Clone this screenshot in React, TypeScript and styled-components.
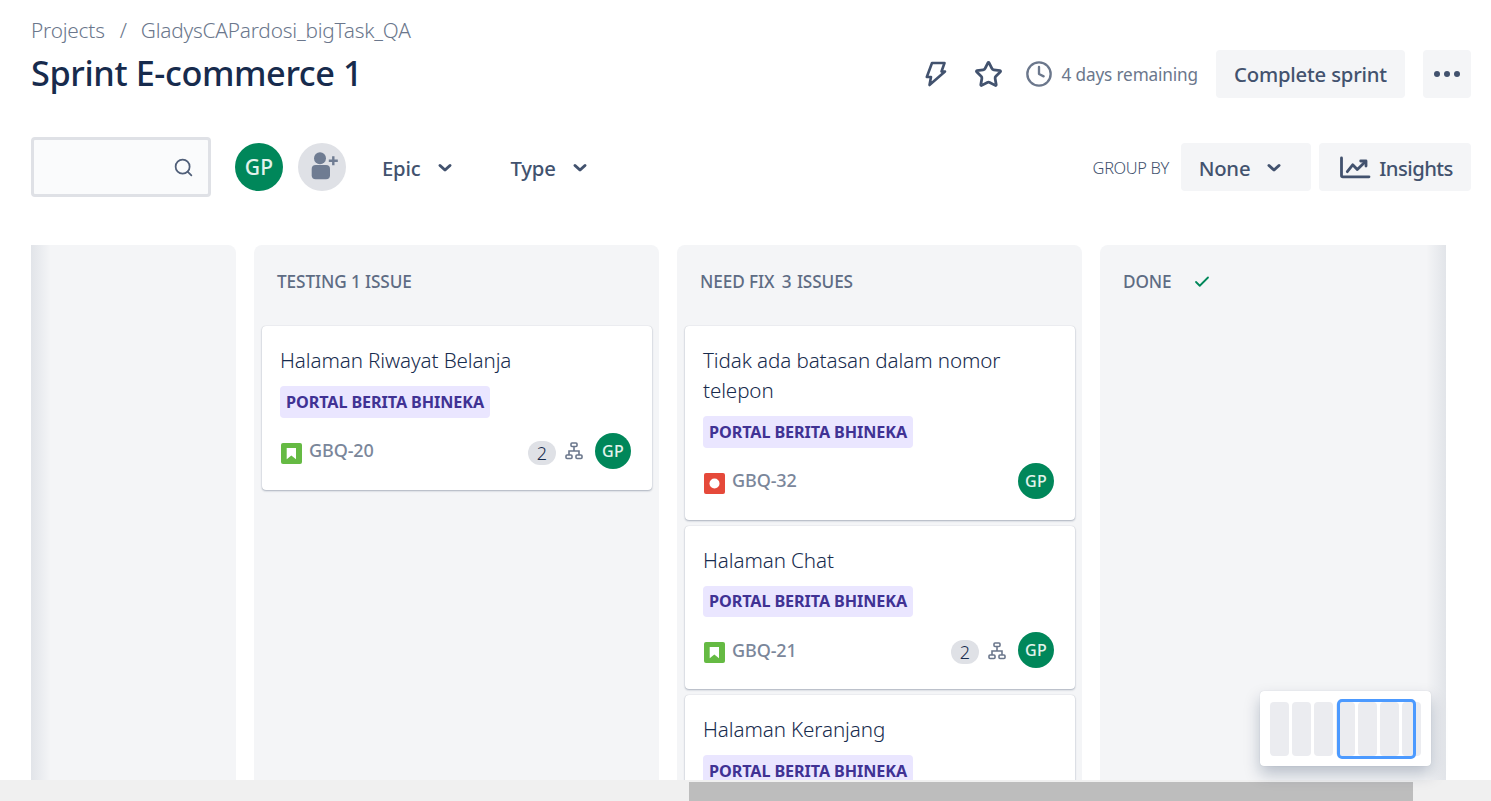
import React from "react";
import styled, { createGlobalStyle } from "styled-components";
import { Star, Clock, Search, Check } from "lucide-react";

const Global = createGlobalStyle`
  html, body { margin: 0; padding: 0; height: 100%; background: #fff; overflow: hidden; }
  body { font-family: "Noto Sans", "Open Sans", "Liberation Sans", sans-serif; color: #172b4d; }
  * { box-sizing: border-box; }
`;

const Page = styled.div`
  display: flex;
  flex-direction: column;
  height: 801px;
  width: 1491px;
  overflow: hidden;
  position: relative;
`;
const Header = styled.header`
  padding: 15px 20px 0 31px;
  flex: none;
`;
const Breadcrumbs = styled.nav`
  display: flex;
  align-items: center;
  height: 30px;
  font-size: 20.8px;
  font-weight: 300;
  color: #6b778c;
  letter-spacing: -0.2px;
`;
const Slash = styled.span`
  margin: 0 14px 0 15px;
`;
const TitleRow = styled.div`
  display: flex;
  align-items: center;
  justify-content: space-between;
  height: 48px;
  margin-top: 5px;
`;
const Title = styled.h1`
  margin: -3px 0 0;
  font-size: 34.3px;
  font-weight: 500;
  color: #172b4d;
  letter-spacing: -0.4px;
  line-height: 48px;
`;
const Actions = styled.div`
  display: flex;
  align-items: center;
`;
const IconSlot = styled.span<{ $mr: number }>`
  display: flex;
  align-items: center;
  justify-content: center;
  color: #42526e;
  margin-right: ${(p) => p.$mr}px;
`;
const Remaining = styled.span`
  font-size: 17.2px;
  color: #6b778c;
  margin-right: 18px;
  letter-spacing: -0.15px;
`;
const GreyButton = styled.button<{ $w: number; $ml?: number }>`
  display: flex;
  align-items: center;
  justify-content: center;
  width: ${(p) => p.$w}px;
  height: 48px;
  margin-left: ${(p) => p.$ml ?? 0}px;
  border: none;
  border-radius: 4px;
  background: #f4f5f7;
  color: #42526e;
  font-family: inherit;
  font-size: 20.3px;
  font-weight: 500;
  letter-spacing: -0.2px;
  padding: 0;
`;
const Dots = styled.span`
  display: flex;
  gap: 4px;
`;
const Dot = styled.i`
  width: 6px;
  height: 6px;
  border-radius: 50%;
  background: #42526e;
`;
const Toolbar = styled.div`
  display: flex;
  align-items: center;
  height: 60px;
  margin-top: 39px;
  justify-content: space-between;
`;
const ToolGroup = styled.div`
  display: flex;
  align-items: center;
`;
const SearchBox = styled.div`
  display: flex;
  align-items: center;
  justify-content: flex-end;
  width: 180px;
  height: 60px;
  border: 3px solid #dfe1e6;
  border-radius: 4px;
  background: #fafbfc;
  padding-right: 14px;
  margin-right: 24px;
  color: #505f79;
`;
const Avatar = styled.span<{ $size: number }>`
  display: flex;
  align-items: center;
  justify-content: center;
  flex: none;
  width: ${(p) => p.$size}px;
  height: ${(p) => p.$size}px;
  border-radius: 50%;
  background: #00875a;
  color: #e3f3ec;
  font-weight: 500;
  font-size: ${(p) => (p.$size > 40 ? 21 : 16)}px;
  letter-spacing: 0.2px;
`;
const AddPeople = styled.span`
  display: flex;
  align-items: center;
  justify-content: center;
  width: 48px;
  height: 48px;
  margin-left: 15px;
  border-radius: 50%;
  background: #dfe1e6;
`;
const Filter = styled.span<{ $ml: number; $gap: number }>`
  display: flex;
  align-items: center;
  gap: ${(p) => p.$gap}px;
  margin-left: ${(p) => p.$ml}px;
  font-size: 20.3px;
  font-weight: 500;
  letter-spacing: -0.2px;
  color: #42526e;
  padding-top: 2px;
`;
const GroupLabel = styled.span`
  font-size: 16.4px;
  font-weight: 300;
  color: #42526e;
  margin-right: 12px;
  letter-spacing: -0.35px;
`;
const ButtonInner = styled.span<{ $gap: number; $shift: number }>`
  display: flex;
  align-items: center;
  gap: ${(p) => p.$gap}px;
  margin-right: ${(p) => p.$shift}px;
  padding-top: 1px;
`;
const InsightsLabel = styled.span`
  letter-spacing: -0.55px;
`;
const BoardWrap = styled.div`
  position: relative;
  flex: 1;
  min-height: 0;
  margin: 48px 45px 0 31px;
  overflow: hidden;
`;
const Track = styled.div`
  display: flex;
  gap: 18px;
  height: 100%;
  margin-left: -200px;
`;
const Column = styled.section`
  flex: none;
  width: 405px;
  height: 100%;
  background: #f4f5f7;
  border-radius: 8px 8px 0 0;
  padding: 0 7px 0 8px;
`;
const ColumnHead = styled.div`
  display: flex;
  align-items: center;
  height: 81px;
  padding: 0 0 8px 15px;
  font-size: 17.2px;
  font-weight: 500;
  color: #5e6c84;
  letter-spacing: -0.1px;
  white-space: pre;
`;
const HeadCount = styled.span`
  margin: 0 1px 0 3px;
`;
const DoneCheck = styled.span`
  display: flex;
  margin-left: 21px;
  color: #00875a;
`;
const Cards = styled.div`
  display: flex;
  flex-direction: column;
  gap: 6px;
`;
const Card = styled.article`
  flex: none;
  background: #fff;
  border-radius: 4px;
  box-shadow: 0 1px 2px rgba(9, 30, 66, 0.3), 0 0 1px rgba(9, 30, 66, 0.2);
  padding: 19px 21px 21px 18px;
`;
const CardTitle = styled.div`
  font-size: 20.6px;
  font-weight: 300;
  line-height: 30px;
  padding-bottom: 1px;
  color: #172b4d;
  letter-spacing: -0.1px;
`;
const Lozenge = styled.div`
  display: inline-flex;
  align-items: center;
  height: 31.6px;
  margin-top: 10px;
  padding: 0 6px;
  background: #eae6ff;
  border-radius: 4px;
  color: #403294;
  font-size: 16.2px;
  font-weight: 700;
  letter-spacing: -0.1px;
  vertical-align: top;
`;
const CardFoot = styled.div`
  display: flex;
  align-items: center;
  margin-top: 15px;
  height: 36px;
`;
const IssueKey = styled.span`
  margin-left: 7px;
  margin-top: -1px;
  font-size: 18px;
  font-weight: 500;
  color: #7a869a;
  letter-spacing: -0.1px;
  flex: 1;
`;
const IssueIcon = styled.span`
  display: flex;
  margin-left: 1px;
  margin-top: 5px;
`;
const Count = styled.span`
  display: flex;
  align-items: center;
  justify-content: center;
  width: 28px;
  height: 24px;
  border-radius: 12px;
  background: #dfe1e6;
  font-size: 18px;
  font-weight: 300;
  color: #172b4d;
  margin-top: 4px;
`;
const TreeSlot = styled.span`
  display: flex;
  margin: 1px 12px 0 9px;
`;
const FadeLeft = styled.div`
  position: absolute;
  left: 0;
  top: 0;
  bottom: 0;
  width: 20px;
  background: linear-gradient(90deg, rgba(9, 30, 66, 0.08), rgba(9, 30, 66, 0));
`;
const FadeRight = styled.div`
  position: absolute;
  right: 0;
  top: 0;
  bottom: 0;
  width: 20px;
  background: linear-gradient(270deg, rgba(9, 30, 66, 0.08), rgba(9, 30, 66, 0));
`;
const Minimap = styled.div`
  position: absolute;
  left: 1260px;
  top: 691px;
  width: 171px;
  height: 75px;
  padding: 11px 10px;
  display: flex;
  gap: 3px;
  background: #fff;
  border-radius: 4px;
  box-shadow: 0 8px 16px rgba(9, 30, 66, 0.25), 0 0 1px rgba(9, 30, 66, 0.2);
`;
const MiniBar = styled.span`
  flex: none;
  width: 19px;
  height: 54px;
  border-radius: 4px;
  background: #ebecf0;
`;
const MiniView = styled.span`
  position: absolute;
  left: 77px;
  top: 8px;
  width: 79px;
  height: 60px;
  border: 3px solid #4c9aff;
  border-radius: 5px;
`;
const Scrollbar = styled.div`
  flex: none;
  height: 21px;
  padding-top: 2px;
  padding-left: 689px;
  background: #f0f0f0;
`;
const Thumb = styled.div`
  width: 724px;
  height: 19px;
  background: #bdbdbd;
`;

const Bolt = () => (
  <svg width="26" height="28" viewBox="0 0 26 28" fill="none" stroke="#42526e" strokeWidth="2.6" strokeLinejoin="round" strokeLinecap="round">
    <path d="M9 3h12.500l-3 8.500H22L6.500 25 8 17H3.800z" />
  </svg>
);
const Chevron = () => (
  <svg width="16" height="10" viewBox="0 0 16 10" fill="none" stroke="#42526e" strokeWidth="3" strokeLinecap="round" strokeLinejoin="round">
    <path d="M3 2.500 8 7l5-4.500" />
  </svg>
);
const Person = () => (
  <svg width="32" height="32" viewBox="0 0 32 32">
    <circle cx="14" cy="7.300" r="6" fill="#6f7c92" />
    <rect x="5.700" y="14" width="18.300" height="14.300" rx="4" fill="#6f7c92" />
    <path d="M27.300 5.200v9M22.800 9.700h9" stroke="#6f7c92" strokeWidth="2.400" />
  </svg>
);
const Chart = () => (
  <svg width="31" height="24" viewBox="0 0 31 24" fill="none" stroke="#42526e" strokeWidth="2.800" strokeLinecap="round" strokeLinejoin="round">
    <path d="M1.500 2v17.500c0 .8.500 1.300 1.300 1.300H29" />
    <path d="M7.300 15.700 12.700 8.800l4.600 4.700L25.500 5.500" />
    <path d="M20.700 5H26v5" />
  </svg>
);
const Story = () => (
  <svg width="21" height="21" viewBox="0 0 21 21">
    <rect width="21" height="21" rx="2" fill="#65ba43" />
    <path d="M5.700 5h9.300v11.200l-4.650-3.600-4.650 3.600z" fill="#fff" />
  </svg>
);
const Bug = () => (
  <svg width="21" height="21" viewBox="0 0 21 21">
    <rect width="21" height="21" rx="2" fill="#e5493a" />
    <circle cx="10.500" cy="10.500" r="5" fill="#fff" />
  </svg>
);
const Tree = () => (
  <svg width="18" height="18" viewBox="0 0 18 18" fill="none" stroke="#6b778c" strokeWidth="1.600">
    <rect x="6" y="1" width="6" height="3.500" rx="1" />
    <rect x="1" y="13" width="6" height="3.500" rx="1" />
    <rect x="11" y="13" width="6" height="3.500" rx="1" />
    <path d="M9 4.500V9M4 13V9h10v4" />
  </svg>
);

type CardData = { title: string; id: string; bug?: boolean; sub?: boolean };

const IssueCard = ({ title, id, bug, sub }: CardData) => (
  <Card>
    <CardTitle>{title}</CardTitle>
    <Lozenge>PORTAL BERITA BHINEKA</Lozenge>
    <CardFoot>
      <IssueIcon>{bug ? <Bug /> : <Story />}</IssueIcon>
      <IssueKey>{id}</IssueKey>
      {sub && (
        <>
          <Count>2</Count>
          <TreeSlot>
            <Tree />
          </TreeSlot>
        </>
      )}
      <Avatar $size={36}>GP</Avatar>
    </CardFoot>
  </Card>
);

export default function App() {
  return (
    <Page>
      <Global />
      <Header>
        <Breadcrumbs>
          <span>Projects</span>
          <Slash>/</Slash>
          <span>GladysCAPardosi_bigTask_QA</span>
        </Breadcrumbs>
        <TitleRow>
          <Title>Sprint E-commerce 1</Title>
          <Actions>
            <IconSlot $mr={25}>
              <Bolt />
            </IconSlot>
            <IconSlot $mr={22}>
              <Star size={29} strokeWidth={2.3} />
            </IconSlot>
            <IconSlot $mr={9}>
              <Clock size={28} strokeWidth={2} color="#6b778c" />
            </IconSlot>
            <Remaining>4 days remaining</Remaining>
            <GreyButton $w={189}>Complete sprint</GreyButton>
            <GreyButton $w={48} $ml={18}>
              <Dots>
                <Dot />
                <Dot />
                <Dot />
              </Dots>
            </GreyButton>
          </Actions>
        </TitleRow>
        <Toolbar>
          <ToolGroup>
            <SearchBox>
              <Search size={21} strokeWidth={2} />
            </SearchBox>
            <Avatar $size={48}>GP</Avatar>
            <AddPeople>
              <Person />
            </AddPeople>
            <Filter $ml={36} $gap={16}>
              Epic <Chevron />
            </Filter>
            <Filter $ml={58} $gap={16}>
              Type <Chevron />
            </Filter>
          </ToolGroup>
          <ToolGroup>
            <GroupLabel>GROUP BY</GroupLabel>
            <GreyButton $w={130}>
              <ButtonInner $gap={16} $shift={11}>
                None <Chevron />
              </ButtonInner>
            </GreyButton>
            <GreyButton $w={152} $ml={8}>
              <ButtonInner $gap={8} $shift={-3}>
                <Chart /> <InsightsLabel>Insights</InsightsLabel>
              </ButtonInner>
            </GreyButton>
          </ToolGroup>
        </Toolbar>
      </Header>
      <BoardWrap>
        <Track>
          <Column />
          <Column>
            <ColumnHead>TESTING 1 ISSUE</ColumnHead>
            <Cards>
              <IssueCard title="Halaman Riwayat Belanja" id="GBQ-20" sub />
            </Cards>
          </Column>
          <Column>
            <ColumnHead>
              NEED FIX<HeadCount> 3 </HeadCount>ISSUES
            </ColumnHead>
            <Cards>
              <IssueCard title="Tidak ada batasan dalam nomor telepon" id="GBQ-32" bug />
              <IssueCard title="Halaman Chat" id="GBQ-21" sub />
              <IssueCard title="Halaman Keranjang" id="GBQ-22" />
            </Cards>
          </Column>
          <Column>
            <ColumnHead>
              DONE
              <DoneCheck>
                <Check size={18} strokeWidth={2.4} />
              </DoneCheck>
            </ColumnHead>
          </Column>
        </Track>
        <FadeLeft />
        <FadeRight />
      </BoardWrap>
      <Scrollbar>
        <Thumb />
      </Scrollbar>
      <Minimap>
        {Array.from({ length: 7 }, (_, i) => (
          <MiniBar key={i} />
        ))}
        <MiniView />
      </Minimap>
    </Page>
  );
}
